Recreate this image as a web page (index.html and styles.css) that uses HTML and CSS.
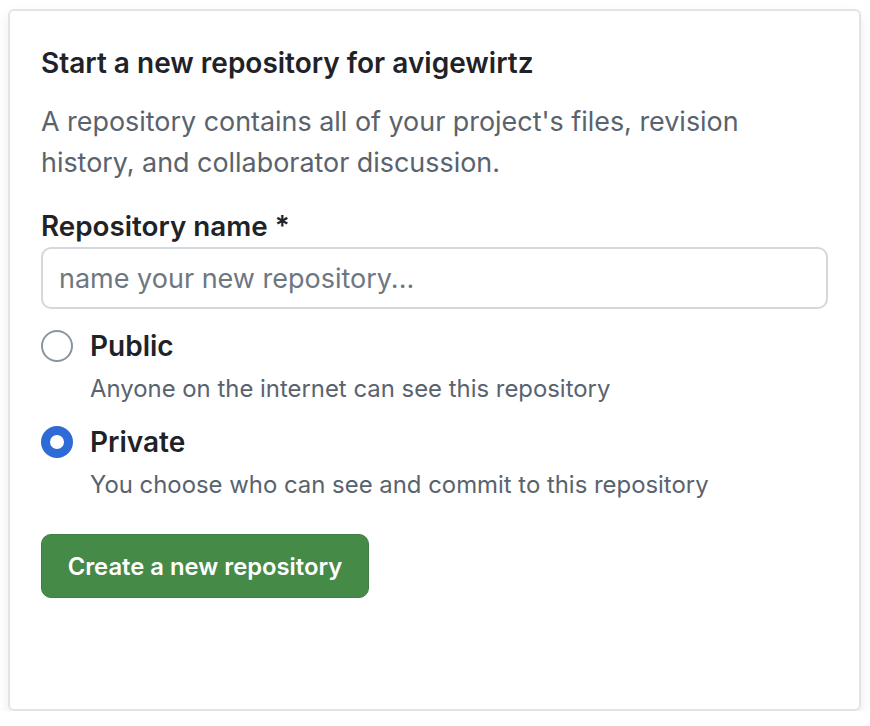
FILE: index.html
```html
<!DOCTYPE html>
<html lang="en">
<head>
<meta charset="utf-8">
<title>Start a new repository</title>
<link rel="stylesheet" href="styles.css">
</head>
<body>
<div class="card">
  <h2 class="title">Start a new repository for avigewirtz</h2>
  <p class="desc">A repository contains all of your project's files, revision history, and collaborator discussion.</p>
  <label class="label" for="repo">Repository name *</label>
  <input class="input" id="repo" type="text" placeholder="name your new repository...">
  <div class="option">
    <span class="radio"></span>
    <span class="opt-title">Public</span>
  </div>
  <div class="opt-desc">Anyone on the internet can see this repository</div>
  <div class="option option-second">
    <span class="radio radio-checked"></span>
    <span class="opt-title">Private</span>
  </div>
  <div class="opt-desc">You choose who can see and commit to this repository</div>
  <div class="actions">
    <button class="btn" type="button">Create a new repository</button>
  </div>
</div>
</body>
</html>
```

FILE: styles.css
```css
* { box-sizing: border-box; }
html, body { margin: 0; padding: 0; background: #ffffff; }
body {
  font-family: Inter, "Noto Sans", "Liberation Sans", sans-serif;
  color: #1f2328;
}
.card {
  margin: 9px 0 0 8px;
  width: 853px;
  height: 702px;
  border: 2px solid #e0e4e8;
  border-radius: 6px;
  padding: 34px 31px 0 31px;
  display: flex;
  flex-direction: column;
  box-shadow: 0 6px 12px rgba(140, 149, 159, 0.18);
}
.title {
  margin: 0;
  font-size: 28px;
  line-height: 36px;
  font-weight: 600;
}
.desc {
  margin: 20px 0 0 0;
  font-size: 26.9px;
  line-height: 41px;
  color: #59636e;
  max-width: 740px;
}
.label {
  margin-top: 25px;
  font-size: 27.8px;
  line-height: 36px;
  font-weight: 600;
}
.input {
  margin-top: 3px;
  height: 62px;
  width: 787px;
  border: 2px solid #d3d8de;
  border-radius: 10px;
  padding: 0 16px;
  font-family: inherit;
  font-size: 27px;
  color: #1f2328;
  background: #ffffff;
  outline: none;
}
.input::placeholder { color: #6e7781; }
.option {
  margin-top: 19px;
  display: flex;
  align-items: center;
  height: 36px;
  gap: 17px;
}
.option-second { margin-top: 20px; }
.radio {
  width: 32px;
  height: 32px;
  border-radius: 50%;
  border: 2px solid #8c959f;
  background: #ffffff;
  flex: none;
}
.radio-checked {
  border: 9px solid #2e6bd6;
}
.opt-title {
  font-size: 28px;
  font-weight: 600;
  line-height: 36px;
}
.opt-desc {
  margin-top: 10px;
  padding-left: 49px;
  font-size: 23.9px;
  line-height: 30px;
  color: #59636e;
}
.actions {
  margin-top: 34px;
  display: flex;
}
.btn {
  height: 64px;
  width: 328px;
  border: 1px solid #3f7d41;
  border-radius: 10px;
  background: #468a48;
  color: #ffffff;
  font-family: inherit;
  font-size: 23.8px;
  font-weight: 600;
  padding: 0;
}
```
